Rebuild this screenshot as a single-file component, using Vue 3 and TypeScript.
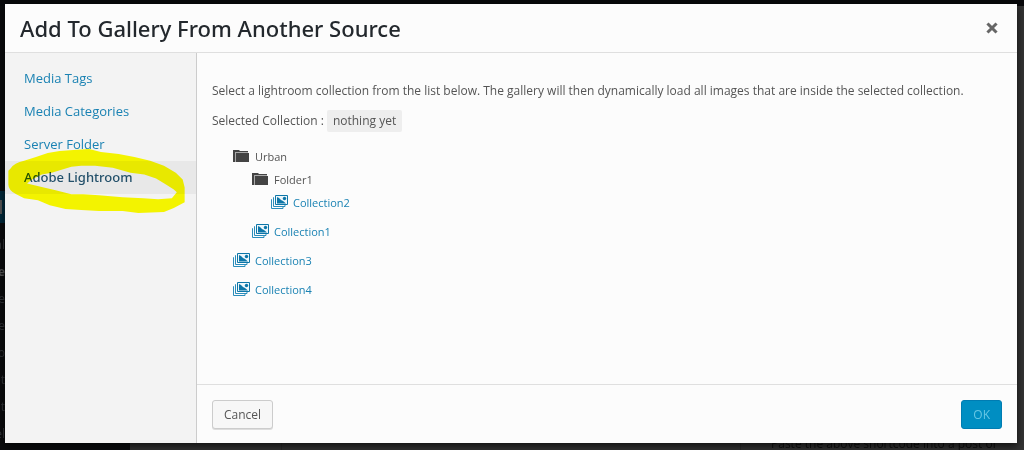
<script setup lang="ts">
import { ref } from 'vue'

interface TreeRow {
  label: string
  level: number
  kind: 'folder' | 'collection'
}

const sources: string[] = ['Media Tags', 'Media Categories', 'Server Folder', 'Adobe Lightroom']
const active = ref('Adobe Lightroom')
const selected = ref('nothing yet')

const rows: TreeRow[] = [
  { label: 'Urban', level: 0, kind: 'folder' },
  { label: 'Folder1', level: 1, kind: 'folder' },
  { label: 'Collection2', level: 2, kind: 'collection' },
  { label: 'Collection1', level: 1, kind: 'collection' },
  { label: 'Collection3', level: 0, kind: 'collection' },
  { label: 'Collection4', level: 0, kind: 'collection' },
]

const menuTails: string[] = ['al', 'de', 'e', 'e', 'b', 'et', 't', 'el']
</script>

<template>
  <div class="page">
    <div class="backdrop" aria-hidden="true">
      <div class="adminbar"></div>
      <div class="admin">
        <div class="adminmenu">
          <div class="current"><i></i></div>
          <span v-for="(tail, i) in menuTails" :key="i" :class="{ bright: i === 1 }">{{ tail }}</span>
        </div>
        <div class="admincontent">
          <div class="column"></div>
          <div class="sidebox"><p>Paste the above shortcode into a post or</p></div>
        </div>
      </div>
    </div>

    <section class="modal" role="dialog" aria-labelledby="modal-title">
      <header class="head">
        <h1 id="modal-title">Add To Gallery From Another Source</h1>
        <button class="close" type="button" aria-label="Close">
          <svg viewBox="0 0 12 12" width="12" height="12">
            <path d="M2.5 2.5 9.5 9.5M9.5 2.5 2.5 9.5" fill="none" stroke="#666" stroke-width="3" stroke-linecap="square" />
          </svg>
        </button>
      </header>

      <nav class="sources">
        <a
          v-for="source in sources"
          :key="source"
          href="#"
          :class="{ active: source === active }"
          @click.prevent="active = source"
        >{{ source }}</a>
        <svg class="marker" viewBox="0 0 180 66" width="178" height="65" aria-hidden="true">
          <path
            fill="#ffff00"
            fill-rule="evenodd"
            d="M2 20 Q6 14 16 12 L28 8 L40 4 L52 2 L66 1 L82 0 L94 3 L112 5 L128 8 L144 12 L158 17 L170 24 L177 31 L179 39 L179 54 L168 60 L158 64 L132 65 L116 63 L92 63 L74 62 L58 61 L42 57 L30 52 L16 50 L8 46 Q0 42 0 36 L0 22ZM19 35 L24 31 L34 26 L44 24 L64 18 L74 17 L88 17 L106 19 L124 24 L138 26 L150 30 L160 36 L168 41 L171 44 L166 50 L152 51 L137 50 L116 49 L92 47 L76 46 L64 46 L48 42 L36 39Z"
          />
        </svg>
      </nav>

      <main class="content">
        <p class="intro">Select a lightroom collection from the list below. The gallery will then dynamically load all images that are inside the selected collection.</p>
        <p class="selection">Selected Collection : <output>{{ selected }}</output></p>
        <ul class="tree">
          <li v-for="row in rows" :key="row.label" :class="[row.kind, 'level' + row.level]">
            <template v-if="row.kind === 'folder'">
              <svg viewBox="0 0 18 16" width="18" height="16" aria-hidden="true">
                <path d="M1 2h6l1 1h8v1H3v10H1Z" fill="#444" />
                <path d="M3 4h13v1H4v9H3Z" fill="#aaa" />
                <path d="M4 5h13v9H4Z" fill="#444" />
              </svg>
              <span>{{ row.label }}</span>
            </template>
            <a v-else href="#" @click.prevent="selected = row.label">
              <svg viewBox="0 0 18 16" width="18" height="16" aria-hidden="true">
                <g fill="none" stroke="#2a8dbb">
                  <path d="M2 5.5H1.500v9H13V13" />
                  <path d="M4 3.500H3.500v9H15V11" />
                </g>
                <path d="M5.500 1.500h12v9h-12Z" fill="#eef7fb" stroke="#0d76a8" />
                <path d="M7 3l2 1 2 2 2 1 3 2.500H7Z" fill="#0d76a8" />
                <circle cx="14.500" cy="4.500" r="1.700" fill="#0d76a8" />
              </svg>
              <span>{{ row.label }}</span>
            </a>
          </li>
        </ul>
      </main>

      <footer class="foot">
        <button class="btn" type="button">Cancel</button>
        <button class="btn primary" type="button" disabled>OK</button>
      </footer>
    </section>
  </div>
</template>

<style>
body {
  margin: 0;
  background: #333;
}
</style>

<style scoped>
.page {
  position: relative;
  min-height: 100vh;
  overflow: hidden;
  font-family: "Open Sans", "Noto Sans", sans-serif;
  font-size: 12px;
  line-height: 18px;
  color: #555;
}
.backdrop {
  position: absolute;
  inset: 0;
  display: flex;
  flex-direction: column;
}
.adminbar {
  height: 6px;
  background: #08090b;
}
.admin {
  flex: 1;
  display: flex;
}
.adminmenu {
  width: 130px;
  background: #0a0b0d;
  padding-top: 185px;
  box-sizing: border-box;
}
.adminmenu .current {
  height: 32px;
  margin-bottom: 8px;
  background: #00293b;
  display: flex;
  align-items: center;
}
.current i {
  width: 2px;
  height: 14px;
  background: #555;
}
.adminmenu span {
  display: flex;
  justify-content: flex-end;
  width: 5px;
  height: 27px;
  line-height: 27px;
  color: #34363a;
}
.adminmenu .bright {
  color: #555;
  font-weight: 700;
}
.admincontent {
  flex: 1;
  display: grid;
  grid-template-columns: 152px 1fr 284px;
  background: #333;
}
.column {
  margin-left: 22px;
  border-right: 1px solid #2b2b2b;
}
.sidebox {
  grid-column: 3;
  display: flex;
  align-items: flex-end;
  padding-left: 30px;
  border-left: 1px solid #2b2b2b;
  white-space: nowrap;
  color: #101010;
}
.sidebox p {
  margin: 0 0 -3px;
}
.modal {
  position: absolute;
  inset: 4px 7px 7px 5px;
  display: grid;
  grid-template-columns: 192px 1fr;
  grid-template-rows: auto 1fr auto;
  background: #fcfcfc;
  box-shadow: 0 3px 8px rgba(0, 0, 0, 0.7);
}
.head {
  grid-column: 1 / -1;
  display: flex;
  align-items: center;
  justify-content: space-between;
  height: 48px;
  padding: 0 17px 0 15px;
  border-bottom: 1px solid #dfdfdf;
}
h1 {
  margin: 0;
  font-family: "Noto Sans", "Open Sans", sans-serif;
  font-size: 22px;
  line-height: 32px;
  font-weight: 500;
  color: #23282d;
}
.close {
  display: flex;
  padding: 2px;
  border: 0;
  background: none;
  cursor: pointer;
}
.sources {
  grid-row: 2 / 4;
  position: relative;
  display: flex;
  flex-direction: column;
  padding-top: 9px;
  background: #f3f3f3;
  border-right: 1px solid #ccc;
}
a {
  color: #1a82b3;
  text-decoration: none;
}
.sources a {
  padding: 7px 19px 8px;
  font-size: 13px;
}
.sources a.active {
  background: #e8e8e8;
  color: #23506a;
  font-family: "Noto Sans", "Open Sans", sans-serif;
  font-weight: 500;
}
.marker {
  position: absolute;
  left: 3px;
  top: 96px;
  mix-blend-mode: multiply;
  pointer-events: none;
}
.content {
  padding: 29px 15px;
}
.intro,
.selection {
  margin: 0 0 10px;
}
.selection {
  line-height: 22px;
}
output {
  display: inline-block;
  padding: 0 6px;
  border-radius: 2px;
  background: #eee;
}
.tree {
  margin: 0;
  padding: 6px 0 0 20px;
  list-style: none;
  font-size: 11px;
}
.tree li {
  display: flex;
  height: 23px;
}
.tree li.collection {
  height: 29px;
}
.tree li.level1 {
  padding-left: 19px;
}
.tree li.level2 {
  padding-left: 38px;
}
.folder,
.tree a {
  gap: 5px;
}
.tree a {
  display: flex;
}
.foot {
  display: flex;
  align-items: flex-start;
  justify-content: space-between;
  padding: 15px 15px 14px;
  border-top: 1px solid #dfdfdf;
}
.btn {
  height: 29px;
  padding: 0 11px;
  border: 1px solid #ccc;
  border-radius: 3px;
  background: #f7f7f7;
  box-shadow: 0 1px 0 #ddd;
  color: #555;
  font: 12px "Open Sans", "Noto Sans", sans-serif;
}
.btn.primary {
  border-color: #007cb2;
  background: #008ec2;
  box-shadow: none;
  color: #66c6e4;
}
</style>
